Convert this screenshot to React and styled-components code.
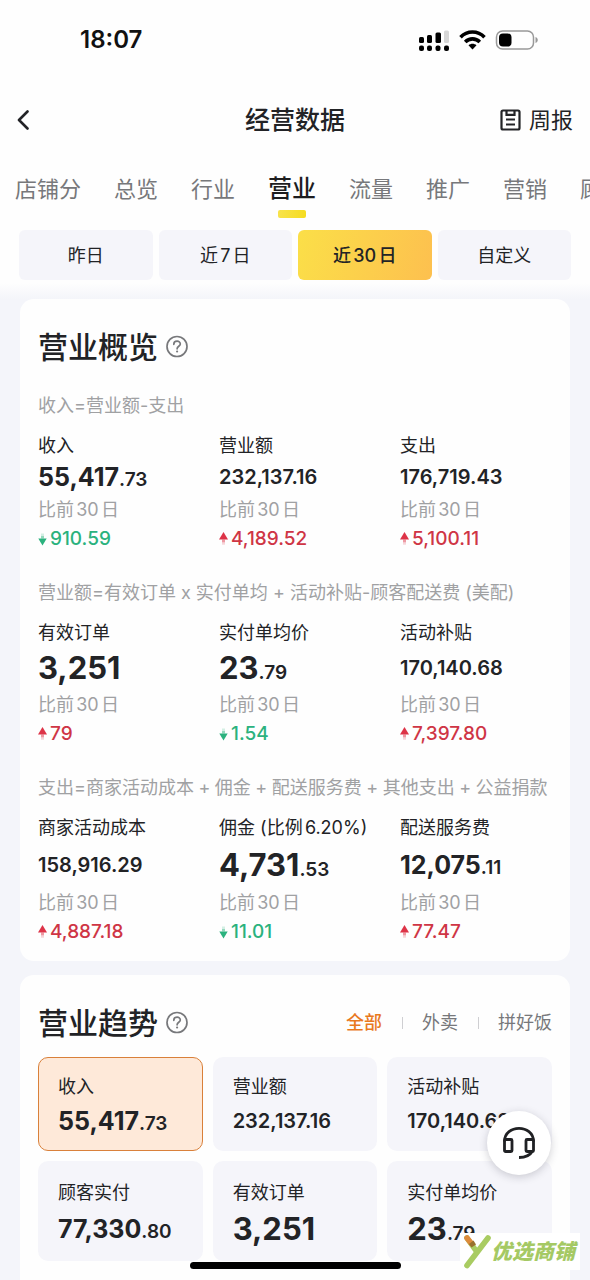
import React, { useState } from "react";
import styled, { createGlobalStyle } from "styled-components";

const GlobalStyle = createGlobalStyle`
  * { box-sizing: border-box; }
  body {
    margin: 0;
    background: #f4f5fa;
    color: #222326;
    font-family: Inter, "Noto Sans CJK SC", sans-serif;
    text-autospace: normal;
  }
  button {
    font: inherit;
    color: inherit;
    border: 0;
    padding: 0;
    background: none;
    cursor: pointer;
  }
  h1, h2, p, dl, dd { margin: 0; }
`;

const Page = styled.div`
  min-height: 100vh;
  display: flex;
  flex-direction: column;
  overflow-x: hidden;
`;

const TopArea = styled.header`
  background: linear-gradient(#fefefe calc(100% - 16px), #f4f5fa);
`;

const StatusBar = styled.div`
  display: flex;
  align-items: center;
  justify-content: space-between;
  height: 80px;
  padding: 0 52px 0 80px;
`;

const Clock = styled.span`
  font-size: 24px;
  line-height: 28px;
  font-weight: 600;
  color: #111;
`;

const StatusIcons = styled.div`
  display: flex;
  align-items: center;
  gap: 9px;
`;

const NavBar = styled.div`
  display: grid;
  grid-template-columns: 1fr auto 1fr;
  align-items: center;
  height: 80px;
  padding: 0 17px;
`;

const BackButton = styled.button`
  display: flex;
  justify-self: start;
`;

const PageTitle = styled.h1`
  font-size: 25px;
  line-height: 32px;
  font-weight: 500;
`;

const ReportButton = styled.button`
  display: flex;
  align-items: center;
  justify-self: end;
  gap: 8px;
  font-size: 22px;
  line-height: 32px;
`;

const Tabs = styled.nav`
  display: flex;
  gap: 33px;
  height: 62px;
  padding: 10px 0 0 15px;
  overflow: hidden;
`;

const Tab = styled.button`
  display: flex;
  flex: none;
  flex-direction: column;
  align-items: center;
  gap: 2px;
  font-size: ${(p) => (p.$active ? 24 : 22)}px;
  line-height: 38px;
  font-weight: ${(p) => (p.$active ? 500 : 400)};
  color: ${(p) => (p.$active ? "#1d1d1f" : "#77787b")};

  &::after {
    content: "";
    width: 28px;
    height: 8px;
    border-radius: 2px;
    background: ${(p) => (p.$active ? "linear-gradient(100deg, #f8e34c, #f5dc1f)" : "none")};
  }
`;

const Periods = styled.div`
  display: grid;
  grid-template-columns: repeat(4, 1fr);
  gap: 6px;
  padding: 8px 19px 19px;
`;

const Period = styled.button`
  height: 50px;
  padding-bottom: 2px;
  border-radius: 6px;
  font-size: 18px;
  font-weight: ${(p) => (p.$active ? 500 : 400)};
  background: ${(p) => (p.$active ? "linear-gradient(105deg, #fbdf48, #fdc04f)" : "#f5f5fa")};
`;

const Main = styled.main`
  display: flex;
  flex: 1;
  flex-direction: column;
  gap: 14px;
  padding: 0 20px;
`;

const Card = styled.section`
  padding: 24px 18px 17px;
  border-radius: 14px;
  background: #fefefe;
`;

const TrendCard = styled(Card)`
  flex: 1;
  padding-bottom: 19px;
  border-bottom-left-radius: 0;
  border-bottom-right-radius: 0;
`;

const CardHead = styled.div`
  display: flex;
  align-items: center;
  justify-content: space-between;
  height: 48px;
`;

const TitleGroup = styled.div`
  display: flex;
  align-items: center;
  gap: 6px;
`;

const CardTitle = styled.h2`
  font-size: 30px;
  line-height: 40px;
  font-weight: 500;
`;

const HelpButton = styled.button`
  display: flex;
`;

const Group = styled.div`
  padding-top: ${(p) => (p.$first ? 23 : 30)}px;
`;

const Formula = styled.p`
  margin-bottom: 16px;
  font-size: 18px;
  line-height: 24px;
  color: #a0a1a3;
  white-space: nowrap;
`;

const MetricRow = styled.dl`
  display: grid;
  grid-template-columns: repeat(3, minmax(0, 1fr));
  column-gap: 29px;
`;

const Metric = styled.div`
  white-space: nowrap;
`;

const MetricName = styled.dt`
  font-size: 18px;
  line-height: 24px;
`;

const MetricValue = styled.dd`
  display: flex;
  align-items: center;
  height: ${(p) => p.$height}px;
  padding-bottom: 2px;
`;

const numberSizes = { small: 20, medium: 25, large: 31 };

const Number = styled.span`
  font-size: ${(p) => numberSizes[p.$size]}px;
  line-height: 32px;
  font-weight: ${(p) => (p.$size === "small" ? 600 : 700)};
`;

const Cents = styled.span`
  font-size: 19px;
  line-height: 1;
  font-weight: 600;
`;

const Compare = styled.dd`
  margin-bottom: 5px;
  font-size: 18px;
  line-height: 24px;
  color: #a0a1a3;
`;

const Delta = styled.dd`
  display: flex;
  align-items: center;
  gap: 2px;
  font-size: 19px;
  line-height: 24px;
  font-weight: 500;
  color: ${(p) => (p.$up ? "#cf3545" : "#2bb27e")};
`;

const Channels = styled.div`
  display: flex;
  align-items: center;
`;

const Channel = styled.button`
  font-size: 18px;
  line-height: 24px;
  font-weight: ${(p) => (p.$active ? 500 : 400)};
  color: ${(p) => (p.$active ? "#e9791e" : "#77787b")};

  & + & {
    margin-left: 20px;
    padding-left: 20px;
    background: linear-gradient(#cfcfd2, #cfcfd2) left center / 1px 12px no-repeat;
  }
`;

const Tiles = styled.div`
  display: grid;
  grid-template-columns: repeat(3, minmax(0, 1fr));
  gap: 10px;
  padding-top: 10px;
`;

const Tile = styled.button`
  display: flex;
  flex-direction: column;
  justify-content: center;
  gap: ${(p) => (p.$tall ? 8 : 6)}px;
  height: ${(p) => (p.$tall ? 100 : 94)}px;
  padding: 3px 19px 0;
  border: 1px solid ${(p) => (p.$active ? "#d9803a" : "transparent")};
  border-radius: 10px;
  background: ${(p) => (p.$active ? "#fee9d9" : "#f5f5fa")};
  text-align: left;
  white-space: nowrap;
`;

const TileName = styled.span`
  font-size: 18px;
  line-height: 24px;
`;

const ServiceButton = styled.button`
  position: fixed;
  right: 39px;
  bottom: 105px;
  display: grid;
  place-items: center;
  width: 64px;
  height: 64px;
  border-radius: 50%;
  background: #fff;
  box-shadow: 0 2px 8px rgba(40, 40, 60, 0.22);
`;

const HomeIndicator = styled.div`
  position: fixed;
  left: 50%;
  bottom: 11px;
  width: 211px;
  height: 7px;
  margin-left: -105px;
  border-radius: 4px;
  background: #000;
`;

const Brand = styled.div`
  position: fixed;
  right: 10px;
  bottom: 10px;
  display: flex;
  align-items: center;
  width: 120px;
  height: 37px;
  padding-left: 3px;
  background: #fff;
  font-size: 21px;
  line-height: 37px;
  font-weight: 900;
  font-style: italic;
  color: #a5c964;
  white-space: nowrap;
`;

const SignalIcon = () => (
  <svg width="31" height="21" viewBox="0 0 31 21" aria-hidden="true">
    <g fill="#000">
      <rect x="0" y="7" width="5" height="6" rx="1.5" />
      <rect x="8" y="5" width="5" height="8" rx="1.5" />
      <rect x="16.500" y="2.500" width="5.500" height="10.500" rx="1.500" />
      <rect x="0" y="15.500" width="5" height="5.500" rx="2" />
      <rect x="8" y="15.500" width="5" height="5.500" rx="2" />
      <rect x="16.500" y="15.500" width="5" height="5.500" rx="2" />
      <rect x="25" y="15.500" width="5" height="5.500" rx="2" />
    </g>
    <rect x="25" y="0.500" width="5" height="12.500" rx="1.500" fill="#d6d6d6" />
  </svg>
);

const WifiIcon = () => (
  <svg width="27" height="20" viewBox="0 0 27 20" aria-hidden="true">
    <g fill="none" stroke="#000" strokeWidth="3.600">
      <path d="M1.500 7.200C8.200 .3 18.800 .3 25.500 7.200" />
      <path d="M6.200 11.900c4.100-4.100 10.500-4.100 14.600 0" />
    </g>
    <path d="M9.500 15.300c2.400-2 5.600-2 8 0L13.500 19.500z" fill="#000" />
  </svg>
);

const BatteryIcon = () => (
  <svg width="43" height="20" viewBox="0 0 43 20" aria-hidden="true">
    <rect x="1.500" y="1" width="37" height="18" rx="6" fill="none" stroke="#999" strokeWidth="1.500" />
    <rect x="4" y="3.500" width="12.500" height="13" rx="4" fill="#000" />
    <path d="M40.500 7c3 1 3 5 0 6z" fill="#999" />
  </svg>
);

const BackIcon = () => (
  <svg width="13" height="20" viewBox="0 0 13 20" aria-hidden="true">
    <path d="M10.500 1.500L2 10l8.500 8.500" fill="none" stroke="#222326" strokeWidth="2.600" strokeLinecap="round" strokeLinejoin="round" />
  </svg>
);

const ReportIcon = () => (
  <svg width="21" height="22" viewBox="0 0 21 22" aria-hidden="true">
    <g fill="none" stroke="#222326" strokeWidth="2.200">
      <rect x="1.500" y="1.500" width="18" height="19" rx="1.500" />
      <path d="M6.500 1.500v4.300h8V1.500M6 10.500h9M6 15.500h9" />
    </g>
  </svg>
);

const HelpIcon = () => (
  <svg width="26" height="24" viewBox="0 0 26 24" aria-hidden="true">
    <g fill="none" stroke="#77787b" strokeWidth="1.700">
      <circle cx="13" cy="11.500" r="10" />
      <path d="M9.800 9.300c0-4.200 6.500-4.100 6.500-.4 0 2.300-3.200 2.400-3.200 4.900" strokeLinecap="round" />
    </g>
    <circle cx="13.100" cy="16.500" r="1.100" fill="#77787b" />
  </svg>
);

const ArrowIcon = ({ up }) => (
  <svg width="10" height="14" viewBox="0 0 10 14" aria-hidden="true">
    {up ? (
      <>
        <path d="M4.500 0L9 7.500H0z" fill="#dd3347" />
        <path d="M3 7.500h3v2.800H3z" fill="#dd3347" opacity=".5" />
        <path d="M3 10.300h3v2.400H3z" fill="#dd3347" opacity=".2" />
      </>
    ) : (
      <>
        <path d="M4.500 13.500L.3 6.500h8.400z" fill="#2bb27e" />
        <path d="M3 4h3v2.500H3z" fill="#2bb27e" opacity=".5" />
        <path d="M3 1.500h3V4H3z" fill="#2bb27e" opacity=".2" />
      </>
    )}
  </svg>
);

const HeadsetIcon = () => (
  <svg width="34" height="34" viewBox="0 0 34 34" aria-hidden="true">
    <g fill="none" stroke="#202124" strokeWidth="2.800">
      <path d="M2.500 15.500C2.500-2 31.500-2 31.500 15.500" />
      <rect x="2.500" y="13.500" width="7.500" height="12" rx="1" />
      <rect x="24" y="13.500" width="7.500" height="12" rx="1" />
      <path d="M30.500 25c-2.500 4.500-7 6.500-13.500 6.500" />
    </g>
  </svg>
);

const BrandIcon = () => (
  <svg width="28" height="35" viewBox="0 0 28 35" aria-hidden="true">
    <g fill="none" strokeLinecap="round" strokeWidth="5.600">
      <path d="M25 4L4 31.500" stroke="#a9cc62" />
      <path d="M4 4l8.500 12" stroke="#a9cc62" />
      <path d="M4 4l4 5" stroke="#dc8b3c" />
    </g>
    <path d="M6 10l4.500-3.500 2.500 4-4.500 3z" fill="#98702e" />
  </svg>
);

const groups = [
  {
    formula: "收入=营业额-支出",
    height: 40,
    metrics: [
      { name: "收入", value: "55,417", cents: ".73", size: "medium", delta: "910.59", up: false },
      { name: "营业额", value: "232,137.16", size: "small", delta: "4,189.52", up: true },
      { name: "支出", value: "176,719.43", size: "small", delta: "5,100.11", up: true },
    ],
  },
  {
    formula: "营业额=有效订单 x 实付单均 + 活动补贴-顾客配送费 (美配)",
    height: 48,
    metrics: [
      { name: "有效订单", value: "3,251", size: "large", delta: "79", up: true },
      { name: "实付单均价", value: "23", cents: ".79", size: "large", delta: "1.54", up: false },
      { name: "活动补贴", value: "170,140.68", size: "small", delta: "7,397.80", up: true },
    ],
  },
  {
    formula: "支出=商家活动成本\u2005+\u2005佣金\u2005+\u2005配送服务费\u2005+\u2005其他支出\u2005+\u2005公益捐款",
    height: 51,
    metrics: [
      { name: "商家活动成本", value: "158,916.29", size: "small", delta: "4,887.18", up: true },
      { name: "佣金 (比例6.20%)", value: "4,731", cents: ".53", size: "large", delta: "11.01", up: false },
      { name: "配送服务费", value: "12,075", cents: ".11", size: "medium", delta: "77.47", up: true },
    ],
  },
];

const tiles = [
  { name: "收入", value: "55,417", cents: ".73", size: "medium" },
  { name: "营业额", value: "232,137.16", size: "small" },
  { name: "活动补贴", value: "170,140.68", size: "small" },
  { name: "顾客实付", value: "77,330", cents: ".80", size: "medium", tall: true },
  { name: "有效订单", value: "3,251", size: "large", tall: true },
  { name: "实付单均价", value: "23", cents: ".79", size: "large", tall: true },
];

const Amount = ({ value, cents, size }) => (
  <Number $size={size}>
    {value}
    {cents && <Cents>{cents}</Cents>}
  </Number>
);

export default function App() {
  const [tab, setTab] = useState("营业");
  const [period, setPeriod] = useState("近30日");
  const [channel, setChannel] = useState("全部");
  const [tile, setTile] = useState("收入");

  return (
    <Page>
      <GlobalStyle />
      <TopArea>
        <StatusBar>
          <Clock>18:07</Clock>
          <StatusIcons>
            <SignalIcon />
            <WifiIcon />
            <BatteryIcon />
          </StatusIcons>
        </StatusBar>
        <NavBar>
          <BackButton aria-label="返回"><BackIcon /></BackButton>
          <PageTitle>经营数据</PageTitle>
          <ReportButton><ReportIcon />周报</ReportButton>
        </NavBar>
        <Tabs>
          {["店铺分", "总览", "行业", "营业", "流量", "推广", "营销", "顾客"].map((name) => (
            <Tab key={name} $active={name === tab} onClick={() => setTab(name)}>{name}</Tab>
          ))}
        </Tabs>
        <Periods>
          {["昨日", "近7日", "近30日", "自定义"].map((name) => (
            <Period key={name} $active={name === period} onClick={() => setPeriod(name)}>{name}</Period>
          ))}
        </Periods>
      </TopArea>
      <Main>
        <Card>
          <CardHead>
            <TitleGroup>
              <CardTitle>营业概览</CardTitle>
              <HelpButton aria-label="营业概览说明"><HelpIcon /></HelpButton>
            </TitleGroup>
          </CardHead>
          {groups.map((group, index) => (
            <Group key={group.formula} $first={index === 0}>
              <Formula>{group.formula}</Formula>
              <MetricRow>
                {group.metrics.map((m) => (
                  <Metric key={m.name}>
                    <MetricName>{m.name}</MetricName>
                    <MetricValue $height={group.height}><Amount {...m} /></MetricValue>
                    <Compare>比前30日</Compare>
                    <Delta $up={m.up}><ArrowIcon up={m.up} />{m.delta}</Delta>
                  </Metric>
                ))}
              </MetricRow>
            </Group>
          ))}
        </Card>
        <TrendCard>
          <CardHead>
            <TitleGroup>
              <CardTitle>营业趋势</CardTitle>
              <HelpButton aria-label="营业趋势说明"><HelpIcon /></HelpButton>
            </TitleGroup>
            <Channels>
              {["全部", "外卖", "拼好饭"].map((name) => (
                <Channel key={name} $active={name === channel} onClick={() => setChannel(name)}>{name}</Channel>
              ))}
            </Channels>
          </CardHead>
          <Tiles>
            {tiles.map((t) => (
              <Tile key={t.name} $tall={t.tall} $active={t.name === tile} onClick={() => setTile(t.name)}>
                <TileName>{t.name}</TileName>
                <Amount {...t} />
              </Tile>
            ))}
          </Tiles>
        </TrendCard>
      </Main>
      <ServiceButton aria-label="联系客服"><HeadsetIcon /></ServiceButton>
      <HomeIndicator />
      <Brand><BrandIcon />优选商铺</Brand>
    </Page>
  );
}
